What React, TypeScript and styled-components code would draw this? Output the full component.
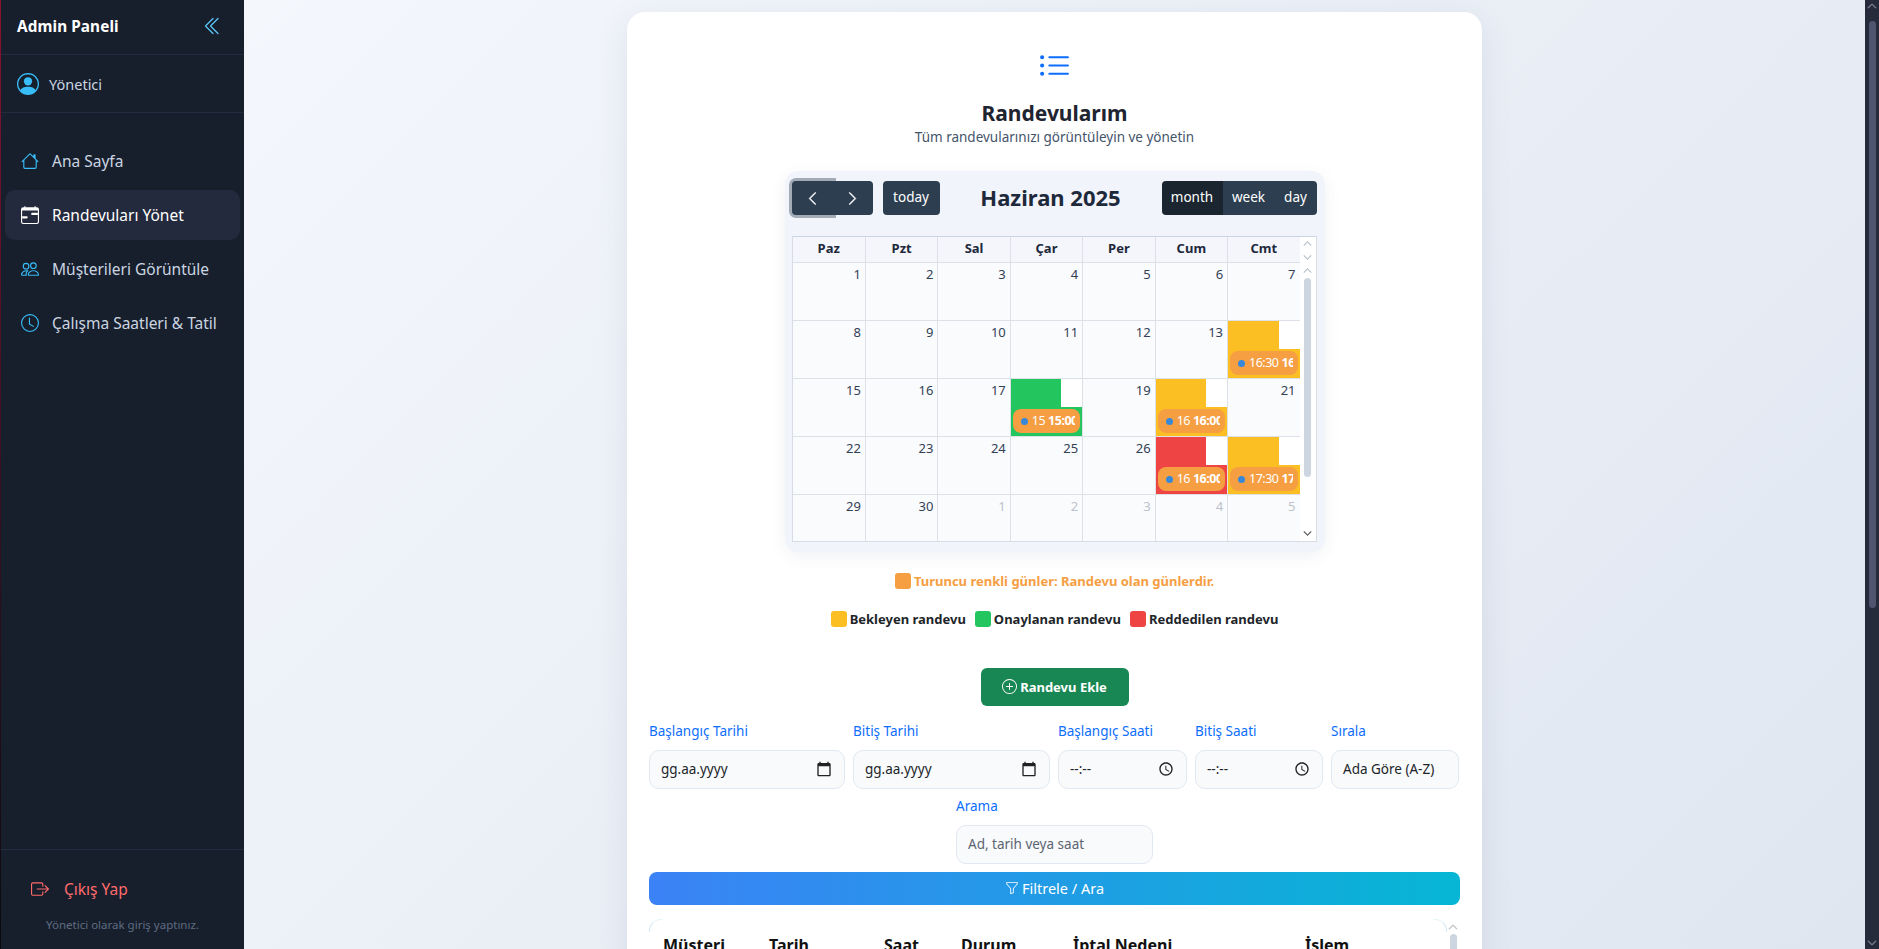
import React from "react";
import styled, { createGlobalStyle } from "styled-components";
import {
  BsChevronDoubleLeft, BsPersonCircle, BsHouse, BsCalendarRange, BsPeople, BsClock,
  BsBoxArrowRight, BsListUl, BsPlusCircle, BsFunnel, BsChevronLeft, BsChevronRight,
  BsChevronUp, BsChevronDown,
} from "react-icons/bs";
import { MdCalendarToday, MdOutlineAccessTime } from "react-icons/md";

const FONT = `"Noto Sans", "Open Sans", sans-serif`;

const Global = createGlobalStyle`
  html, body { margin: 0; padding: 0; height: 100%; overflow: hidden; }
  body { font-family: ${FONT}; color: #212529; }
  * { box-sizing: border-box; }
`;

const Page = styled.div`
  position: relative;
  display: flex;
  height: 949px;
  overflow: hidden;
  background: linear-gradient(135deg, #f6f8fd 0%, #dfe6f0 100%);
`;

const Sidebar = styled.aside`
  flex: 0 0 244px;
  display: flex;
  flex-direction: column;
  background: #171f2d;
  border-left: 1px solid;
  border-image: linear-gradient(180deg, #8a1230 0%, #3a1022 50%, #0a0a10 100%) 1;
`;

const Brand = styled.div`
  height: 55px;
  display: flex;
  align-items: center;
  justify-content: space-between;
  padding: 0 21px 2px 16px;
  border-bottom: 1px solid #232b3e;
  font-size: 15.3px;
  font-weight: 700;
  color: #fff;
  letter-spacing: 0.1px;
  svg { font-size: 20px; color: #5cc8fa; }
`;

const UserRow = styled.div`
  height: 58px;
  display: flex;
  align-items: center;
  gap: 10px;
  padding: 0 16px;
  border-bottom: 1px solid #232b3e;
  font-size: 14.5px;
  color: #cbd5e1;
  svg { font-size: 22px; color: #38bdf8; }
`;

const Nav = styled.nav`
  display: flex;
  flex-direction: column;
  gap: 4px;
  padding: 23px 4px 0;
`;

const NavItem = styled.a<{ $active?: boolean }>`
  height: 50px;
  display: flex;
  align-items: center;
  gap: 13px;
  padding: 0 15px 0 16px;
  border-radius: 10px;
  font-size: 15.5px;
  white-space: nowrap;
  background: ${(p) => (p.$active ? "#232a3d" : "transparent")};
  color: ${(p) => (p.$active ? "#fff" : "#cbd5e1")};
  svg { flex: 0 0 18px; font-size: 18px; color: ${(p) => (p.$active ? "#fff" : "#38bdf8")}; }
`;

const SideFooter = styled.div`
  margin-top: auto;
  height: 100px;
  padding-top: 29px;
  border-top: 1px solid #232b3e;
  display: flex;
  flex-direction: column;
  gap: 18px;
`;

const Logout = styled.a`
  display: flex;
  align-items: center;
  gap: 15px;
  padding-left: 30px;
  font-size: 15.5px;
  line-height: 20px;
  color: #ff6b6b;
  svg { font-size: 18px; }
`;

const SideNote = styled.div`
  text-align: center;
  font-size: 11.5px;
  line-height: 16px;
  color: #5f6c80;
`;

const Main = styled.main`
  flex: 1;
  min-width: 0;
  display: flex;
  justify-content: center;
  padding: 12px 14px 0 0;
`;

const Card = styled.section`
  width: 855px;
  height: 1200px;
  flex: none;
  padding: 38px 22px 0;
  background: #fff;
  border-radius: 18px;
  box-shadow: 0 8px 32px rgba(60, 80, 120, 0.1);
  display: flex;
  flex-direction: column;
  align-items: center;
`;

const ListIcon = styled(BsListUl)`
  font-size: 33px;
  color: #0d6efd;
  flex: none;
`;

const Title = styled.h1`
  margin: 16px 0 0;
  font-size: 21px;
  line-height: 28px;
  font-weight: 700;
  color: #1e2430;
`;

const Subtitle = styled.p`
  margin: 0;
  font-size: 13.5px;
  line-height: 20px;
  color: #44546a;
`;

const CalendarBox = styled.div`
  width: 540px;
  margin-top: 24px;
  padding: 10px 8px 10px 7px;
  background: #f1f4fa;
  border-radius: 14px;
  box-shadow: 0 4px 16px rgba(60, 80, 120, 0.08);
`;

const Toolbar = styled.div`
  display: flex;
  align-items: center;
  justify-content: space-between;
  height: 34px;
  margin-bottom: 21px;
`;

const ToolGroup = styled.div`
  display: flex;
  align-items: center;
  gap: 10px;
`;

const Segment = styled.div`
  display: flex;
  border-radius: 4px;
`;

const ToolBtn = styled.button<{ $w: number; $active?: boolean; $focus?: boolean; $pos?: string }>`
  width: ${(p) => p.$w}px;
  height: 34px;
  padding: 0 0 3px;
  border: none;
  display: flex;
  align-items: center;
  justify-content: center;
  font: 13.5px ${FONT};
  color: #fff;
  background: ${(p) => (p.$active ? "#1a252f" : "#2c3e50")};
  border-radius: ${(p) => (p.$pos === "l" ? "4px 0 0 4px" : p.$pos === "r" ? "0 4px 4px 0" : p.$pos === "m" ? "0" : "4px")};
  box-shadow: ${(p) => (p.$focus ? "0 0 0 3px rgba(44, 62, 80, 0.4)" : "none")};
  position: relative;
  z-index: ${(p) => (p.$focus ? 1 : 0)};
  svg { font-size: 15px; stroke-width: 0.6; margin-top: 3px; }
`;

const MonthTitle = styled.h2`
  margin: 0 0 2px;
  font-size: 22px;
  font-weight: 700;
  line-height: 28px;
  color: #1e293b;
`;

const Grid = styled.div`
  position: relative;
  width: 525px;
  height: 306px;
  border: 1px solid #d8dde5;
  border-top-color: #cbd5e1;
  background: #fff;
  padding-right: 16px;
`;

const HeadRow = styled.div`
  display: grid;
  grid-template-columns: repeat(7, 1fr);
  height: 26px;
  background: #f4f6fb;
  border-bottom: 1px solid #dde1e7;
`;

const HeadCell = styled.div`
  display: flex;
  align-items: center;
  justify-content: center;
  padding-bottom: 3px;
  font-size: 13px;
  font-weight: 700;
  color: #1e293b;
  border-left: 1px solid #dde1e7;
  &:first-child { border-left: none; }
`;

const WeekRow = styled.div`
  display: grid;
  grid-template-columns: repeat(7, 1fr);
  height: 58px;
  border-bottom: 1px solid #dde1e7;
  &:nth-child(6) { height: 46px; border-bottom: none; }
`;

const STATUS: Record<string, string> = { pending: "#fbbf24", ok: "#22c55e", no: "#ef4444" };

const DayCell = styled.div<{ $status?: string }>`
  min-width: 0;
  overflow: hidden;
  display: flex;
  flex-direction: column;
  align-items: stretch;
  background: ${(p) => (p.$status ? STATUS[p.$status] : "#fafbfd")};
  border-left: 1px solid #dde1e7;
  &:first-child { border-left: none; }
`;

const DayTop = styled.div`
  display: flex;
  justify-content: flex-end;
  height: 28px;
`;

const DayNum = styled.span<{ $muted?: boolean; $event?: boolean }>`
  padding: 2px 4px 0;
  font-size: 13px;
  line-height: 18px;
  height: 28px;
  color: ${(p) => (p.$event ? "#fff" : p.$muted ? "#bcc1ca" : "#334155")};
  font-weight: ${(p) => (p.$event ? 700 : 400)};
  background: ${(p) => (p.$event ? "#fff" : "transparent")};
  width: ${(p) => (p.$event ? "21px" : "auto")};
`;

const EventPill = styled.div`
  margin: 2px 2px 0;
  height: 24px;
  display: flex;
  align-items: center;
  gap: 4px;
  padding: 0 5px 0 6px;
  background: #f59e42;
  border-radius: 8px;
  font-size: 12.5px;
  color: #fff;
  overflow: hidden;
  white-space: nowrap;
`;

const Dot = styled.span`
  flex: 0 0 7px;
  width: 7px;
  height: 7px;
  margin-left: 2px;
  border-radius: 50%;
  background: #3788d8;
`;

const PillClip = styled.span`
  overflow: hidden;
  display: flex;
  gap: 3px;
  padding-bottom: 2px;
  letter-spacing: -0.5px;
  b { font-weight: 700; }
`;

const GridScroll = styled.div`
  position: absolute;
  top: 0;
  right: 0;
  bottom: 0;
  width: 16px;
  background: #fff;
  color: #b8bfc9;
  font-size: 9px;
  svg { position: absolute; left: 3px; stroke-width: 1.2; }
`;

const Thumb = styled.div`
  position: absolute;
  left: 4px;
  top: 41px;
  width: 7px;
  height: 199px;
  background: #cdd6e0;
  border-radius: 4px;
`;

const LegendRow = styled.div<{ $top: number; $color: string }>`
  display: flex;
  align-items: center;
  justify-content: center;
  gap: 9px;
  margin-top: ${(p) => p.$top}px;
  height: 18px;
  font-size: 13px;
  font-weight: 700;
  color: ${(p) => p.$color};
`;

const LegendItem = styled.span`
  display: flex;
  align-items: center;
  gap: 3px;
`;

const Swatch = styled.i<{ $color: string }>`
  width: 16px;
  height: 16px;
  border-radius: 3px;
  background: ${(p) => p.$color};
`;

const AddBtn = styled.button`
  margin-top: 40px;
  width: 148px;
  height: 38px;
  flex: none;
  border: none;
  border-radius: 6px;
  padding: 0 0 1px;
  display: flex;
  align-items: center;
  justify-content: center;
  gap: 3px;
  background: #198754;
  color: #fff;
  font: 700 13px ${FONT};
  svg { font-size: 15px; }
`;

const FilterGrid = styled.div`
  width: 100%;
  margin-top: 16px;
  display: grid;
  grid-template-columns: 196px 197px 129px 128px 128px;
  column-gap: 8px;
`;

const FilterCol = styled.div<{ $narrow?: boolean }>`
  display: flex;
  flex-direction: column;
  gap: 10px;
  ${(p) => (p.$narrow ? "width: 197px; margin: 8px auto 0;" : "")}
`;

const Label = styled.label`
  font-size: 13.5px;
  line-height: 18px;
  height: 18px;
  color: #0d6efd;
`;

const Field = styled.div<{ $muted?: boolean }>`
  height: 39px;
  display: flex;
  align-items: center;
  justify-content: space-between;
  padding: 0 12px 1px 11px;
  background: #f8fafc;
  border: 1px solid #e2e8f0;
  border-radius: 10px;
  font-size: 13.5px;
  color: ${(p) => (p.$muted ? "#5b6470" : "#212529")};
  white-space: nowrap;
  svg { font-size: 16px; color: #222; }
`;

const FilterButton = styled.button`
  width: 100%;
  height: 33px;
  margin-top: 8px;
  flex: none;
  border: none;
  border-radius: 8px;
  padding: 0 0 2px;
  display: flex;
  align-items: center;
  justify-content: center;
  gap: 3px;
  background: linear-gradient(90deg, #3b82f6, #06b6d4);
  color: #fff;
  font: 14.5px ${FONT};
  svg { font-size: 14px; }
`;

const TableWrap = styled.div`
  position: relative;
  width: 100%;
  height: 200px;
  margin-top: 14px;
  padding-top: 14px;
  flex: none;
  &::before,
  &::after {
    content: "";
    position: absolute;
    top: 0;
    width: 12px;
    height: 12px;
  }
  &::before {
    left: 0;
    border-left: 1px solid #cfe9f2;
    border-radius: 12px 0 0 0;
    border-top: 1px solid #e4f3f8;
  }
  &::after {
    right: 13px;
    border-right: 1px solid #cfe9f2;
    border-radius: 0 12px 0 0;
    border-top: 1px solid #e4f3f8;
  }
`;

const DataTable = styled.table`
  border-collapse: collapse;
  width: 790px;
  table-layout: fixed;
  th {
    padding: 0 0 0 14px;
    text-align: left;
    font-size: 16px;
    line-height: 24px;
    font-weight: 700;
    color: #111;
    white-space: nowrap;
  }
`;

const TableScroll = styled.div`
  position: absolute;
  top: 0;
  right: 0;
  bottom: 0;
  width: 13px;
  background: #fff;
  color: #b8b8b8;
  font-size: 10px;
  svg { position: absolute; left: 1px; top: 3px; stroke-width: 1; }
`;

const TableThumb = styled.div`
  position: absolute;
  left: 3px;
  top: 15px;
  width: 7px;
  height: 180px;
  border-radius: 4px;
  background: #cdd6e0;
`;

const PageScroll = styled.div`
  position: absolute;
  top: 0;
  right: 0;
  bottom: 0;
  width: 14px;
  background: #262b3b;
  color: #8a8e9c;
  font-size: 10px;
  svg { position: absolute; left: 2px; stroke-width: 1; }
`;

const PageThumb = styled.div`
  position: absolute;
  left: 4px;
  top: 21px;
  width: 7px;
  height: 587px;
  border-radius: 4px;
  background: #50556f;
`;

type Ev = { status: string; a: string; b: string };
const EVENTS: Record<number, Ev> = {
  14: { status: "pending", a: "16:30", b: "16:30" },
  18: { status: "ok", a: "15", b: "15:00" },
  20: { status: "pending", a: "16", b: "16:00" },
  27: { status: "no", a: "16", b: "16:00" },
  28: { status: "pending", a: "17:30", b: "17" },
};

const DAYS = ["Paz", "Pzt", "Sal", "Çar", "Per", "Cum", "Cmt"];
const WEEKS = [
  [1, 2, 3, 4, 5, 6, 7],
  [8, 9, 10, 11, 12, 13, 14],
  [15, 16, 17, 18, 19, 20, 21],
  [22, 23, 24, 25, 26, 27, 28],
  [29, 30, 1, 2, 3, 4, 5],
];

const NAV = [
  { icon: <BsHouse />, label: "Ana Sayfa" },
  { icon: <BsCalendarRange />, label: "Randevuları Yönet", active: true },
  { icon: <BsPeople />, label: "Müşterileri Görüntüle" },
  { icon: <BsClock />, label: "Çalışma Saatleri & Tatil" },
];

const COLS = [106, 115, 77, 112, 232, 148];
const HEADS = ["Müşteri", "Tarih", "Saat", "Durum", "İptal Nedeni", "İşlem"];

export default function App() {
  return (
    <>
      <Global />
      <Page>
        <Sidebar>
          <Brand>
            <span>Admin Paneli</span>
            <BsChevronDoubleLeft />
          </Brand>
          <UserRow>
            <BsPersonCircle />
            <span>Yönetici</span>
          </UserRow>
          <Nav>
            {NAV.map((n) => (
              <NavItem key={n.label} $active={n.active}>
                {n.icon}
                {n.label}
              </NavItem>
            ))}
          </Nav>
          <SideFooter>
            <Logout>
              <BsBoxArrowRight />
              Çıkış Yap
            </Logout>
            <SideNote>Yönetici olarak giriş yaptınız.</SideNote>
          </SideFooter>
        </Sidebar>
        <Main>
          <Card>
            <ListIcon />
            <Title>Randevularım</Title>
            <Subtitle>Tüm randevularınızı görüntüleyin ve yönetin</Subtitle>
            <CalendarBox>
              <Toolbar>
                <ToolGroup>
                  <Segment>
                    <ToolBtn $w={41} $pos="l" $focus><BsChevronLeft /></ToolBtn>
                    <ToolBtn $w={40} $pos="r"><BsChevronRight /></ToolBtn>
                  </Segment>
                  <ToolBtn $w={57}>today</ToolBtn>
                </ToolGroup>
                <MonthTitle>Haziran 2025</MonthTitle>
                <Segment>
                  <ToolBtn $w={61} $pos="l" $active>month</ToolBtn>
                  <ToolBtn $w={52} $pos="m">week</ToolBtn>
                  <ToolBtn $w={42} $pos="r">day</ToolBtn>
                </Segment>
              </Toolbar>
              <Grid>
                <HeadRow>
                  {DAYS.map((d) => <HeadCell key={d}>{d}</HeadCell>)}
                </HeadRow>
                {WEEKS.map((w, wi) => (
                  <WeekRow key={wi}>
                    {w.map((d, di) => {
                      const muted = wi === 4 && di > 1;
                      const ev = !muted ? EVENTS[d] : undefined;
                      return (
                        <DayCell key={di} $status={ev?.status}>
                          <DayTop>
                            <DayNum $muted={muted} $event={!!ev}>{d}</DayNum>
                          </DayTop>
                          {ev && (
                            <EventPill>
                              <Dot />
                              <PillClip>
                                <span>{ev.a}</span>
                                <b>{ev.b}</b>
                              </PillClip>
                            </EventPill>
                          )}
                        </DayCell>
                      );
                    })}
                  </WeekRow>
                ))}
                <GridScroll>
                  <BsChevronUp style={{ top: 2 }} />
                  <BsChevronDown style={{ top: 16 }} />
                  <BsChevronUp style={{ top: 29 }} />
                  <Thumb />
                  <BsChevronDown style={{ bottom: 3, color: "#555" }} />
                </GridScroll>
              </Grid>
            </CalendarBox>
            <LegendRow $top={20} $color="#f59e42">
              <LegendItem><Swatch $color="#f59e42" />Turuncu renkli günler: Randevu olan günlerdir.</LegendItem>
            </LegendRow>
            <LegendRow $top={20} $color="#212529">
              <LegendItem><Swatch $color="#fbbf24" />Bekleyen randevu</LegendItem>
              <LegendItem><Swatch $color="#22c55e" />Onaylanan randevu</LegendItem>
              <LegendItem><Swatch $color="#ef4444" />Reddedilen randevu</LegendItem>
            </LegendRow>
            <AddBtn><BsPlusCircle />Randevu Ekle</AddBtn>
            <FilterGrid>
              <FilterCol>
                <Label>Başlangıç Tarihi</Label>
                <Field>gg.aa.yyyy<MdCalendarToday /></Field>
              </FilterCol>
              <FilterCol>
                <Label>Bitiş Tarihi</Label>
                <Field>gg.aa.yyyy<MdCalendarToday /></Field>
              </FilterCol>
              <FilterCol>
                <Label>Başlangıç Saati</Label>
                <Field>--:--<MdOutlineAccessTime /></Field>
              </FilterCol>
              <FilterCol>
                <Label>Bitiş Saati</Label>
                <Field>--:--<MdOutlineAccessTime /></Field>
              </FilterCol>
              <FilterCol>
                <Label>Sırala</Label>
                <Field>Ada Göre (A-Z)</Field>
              </FilterCol>
            </FilterGrid>
            <FilterCol $narrow>
              <Label>Arama</Label>
              <Field $muted>Ad, tarih veya saat</Field>
            </FilterCol>
            <FilterButton><BsFunnel />Filtrele / Ara</FilterButton>
            <TableWrap>
              <DataTable>
                <colgroup>
                  {COLS.map((c, i) => <col key={i} style={{ width: c }} />)}
                </colgroup>
                <thead>
                  <tr>{HEADS.map((h) => <th key={h}>{h}</th>)}</tr>
                </thead>
              </DataTable>
              <TableScroll>
                <BsChevronUp />
                <TableThumb />
              </TableScroll>
            </TableWrap>
          </Card>
        </Main>
        <PageScroll>
          <BsChevronUp style={{ top: 1 }} />
          <PageThumb />
          <BsChevronDown style={{ bottom: 1 }} />
        </PageScroll>
      </Page>
    </>
  );
}
